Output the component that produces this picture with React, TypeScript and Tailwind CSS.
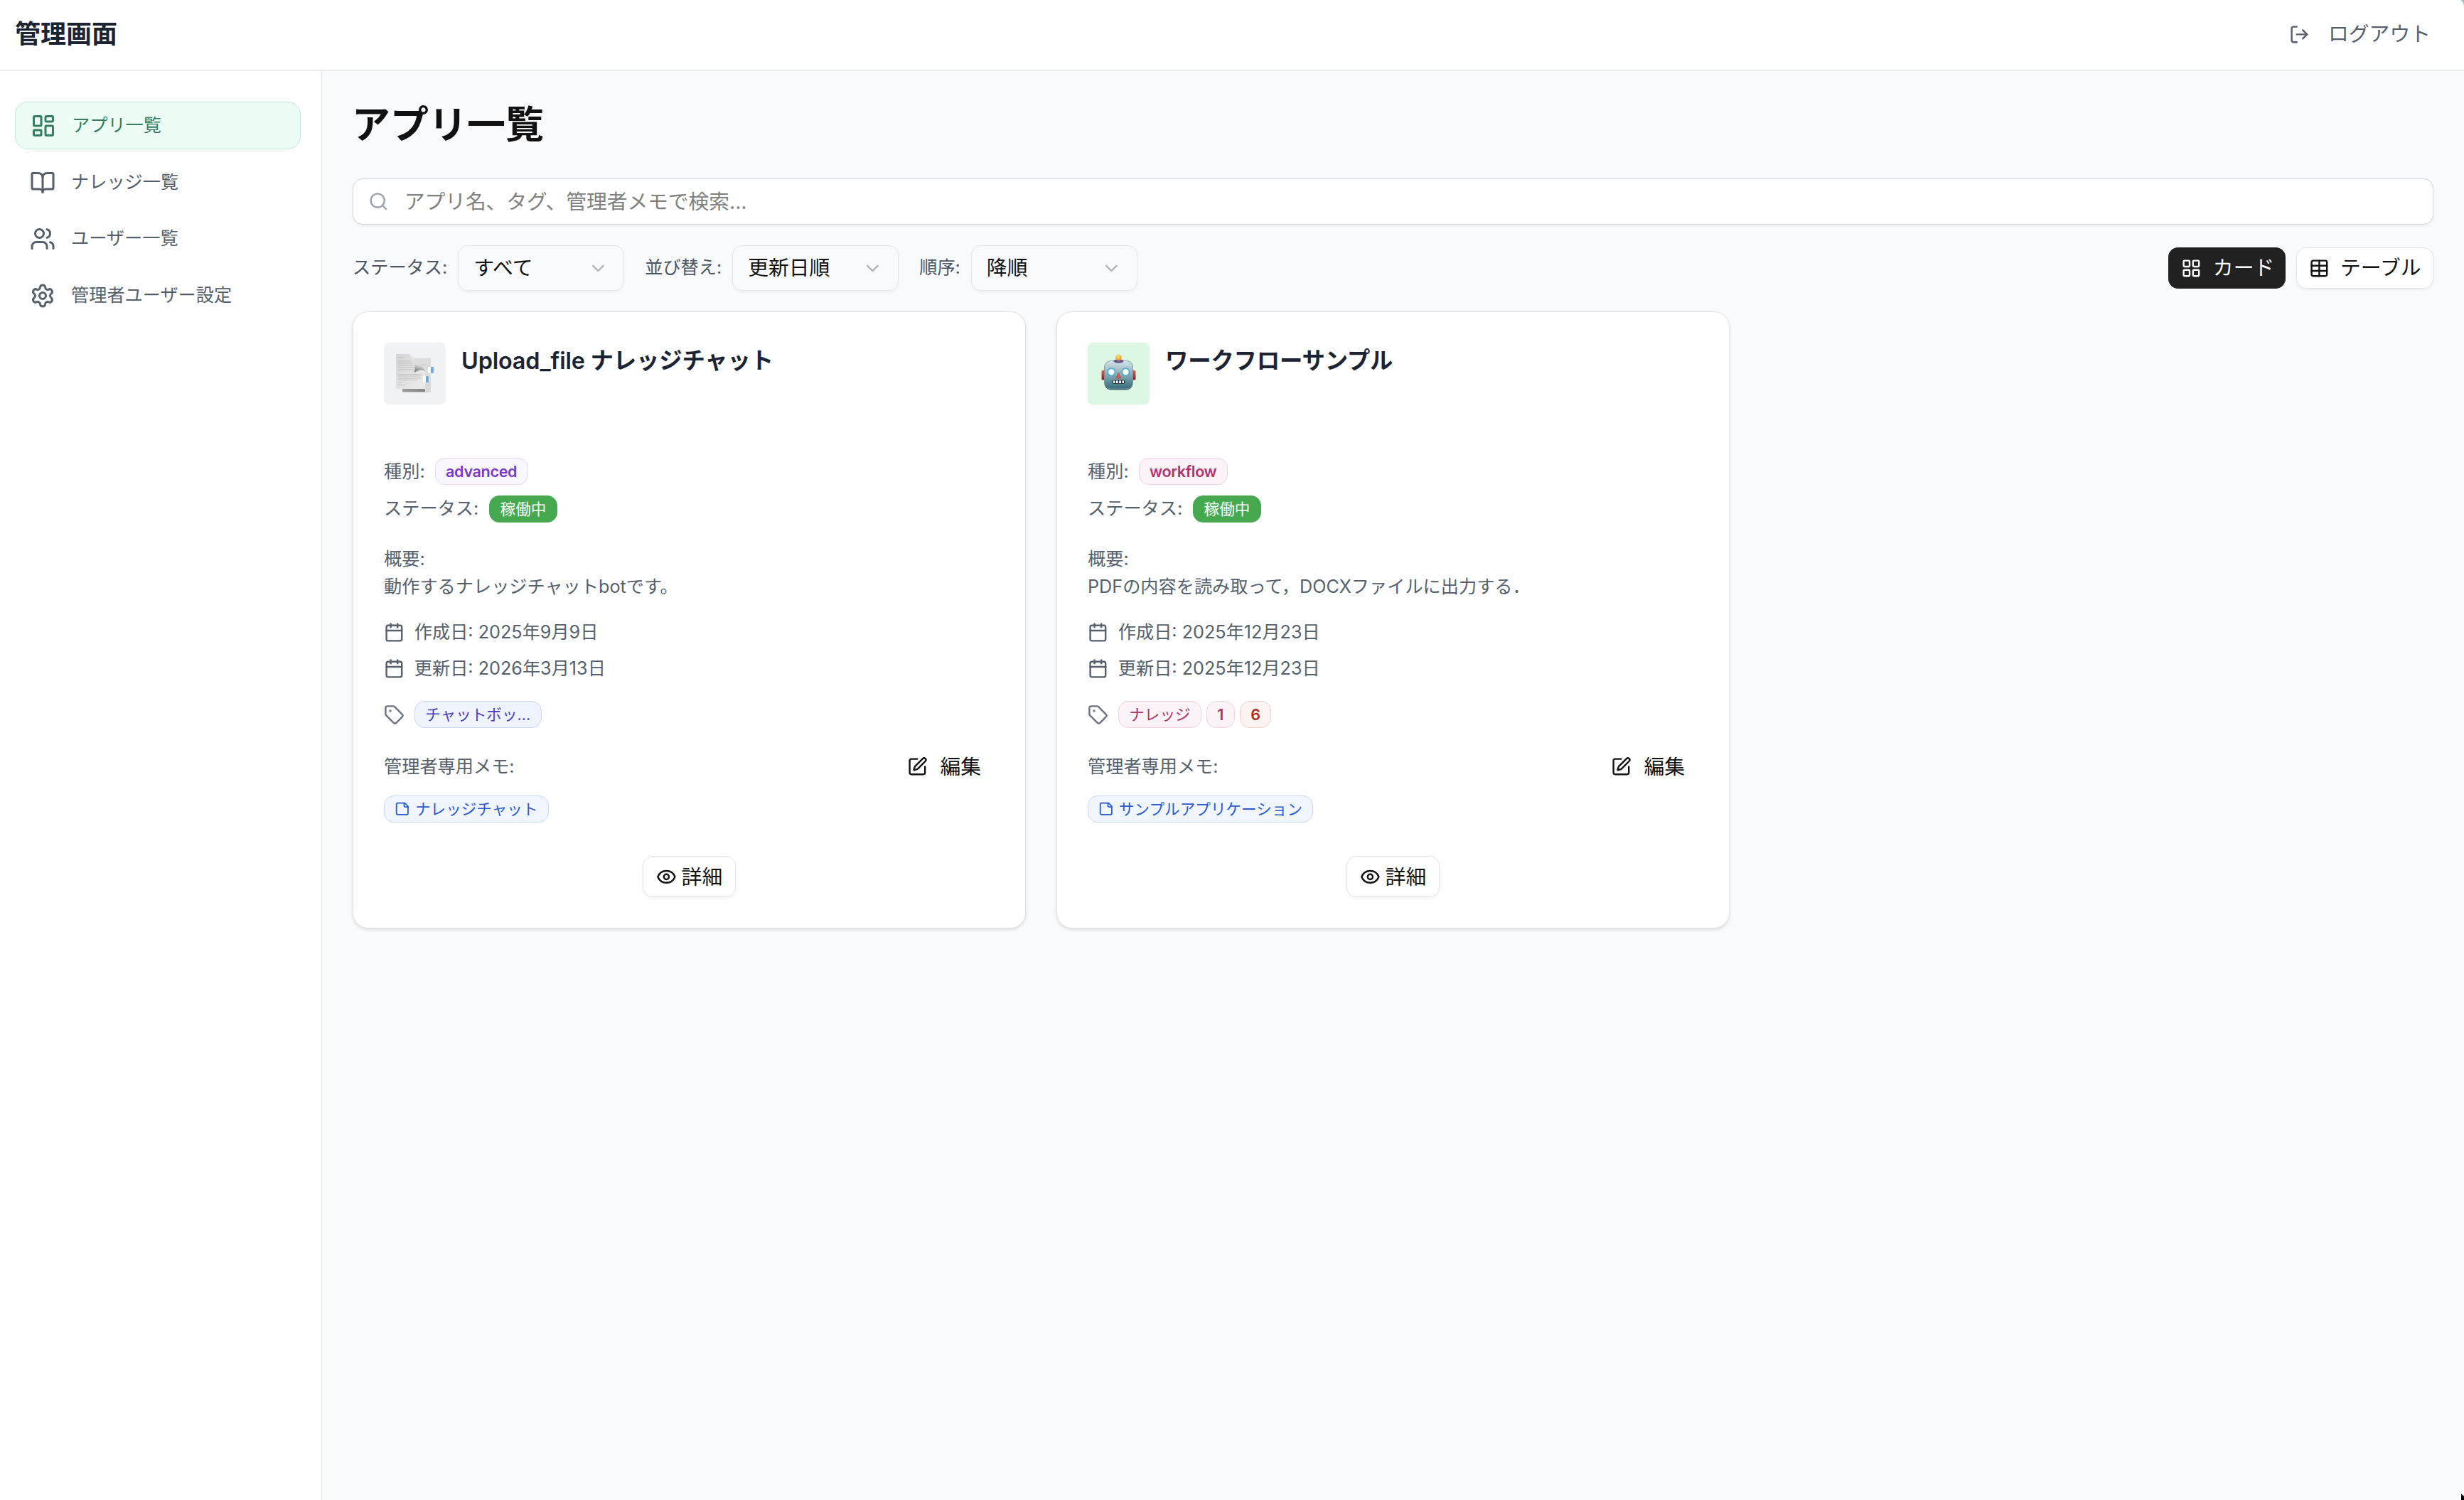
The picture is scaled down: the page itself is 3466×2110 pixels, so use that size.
import type { ReactNode } from "react";
import {
  BookOpen,
  Calendar,
  ChevronDown,
  Eye,
  LayoutDashboard,
  LayoutGrid,
  LogOut,
  Search,
  Settings,
  Table,
  Tag,
  Users,
} from "lucide-react";

type AppTag = { label: string; className: string };

type AppItem = {
  name: string;
  icon: ReactNode;
  iconClass: string;
  type: string;
  typeClass: string;
  description: string;
  createdAt: string;
  updatedAt: string;
  tags: AppTag[];
  memo: string;
};

const indigoTag = "border-[#ccd5f6] bg-[#eff3fd] text-[#4a3fc0]";
const pinkTag = "border-[#f0d3e3] bg-[#fbf3f8] text-[#ad356c]";
const redTag = "border-[#f3d0cd] bg-[#fcf3f2] text-[#aa2f26]";

/* ドキュメントの絵文字風アイコン */
function PageIcon() {
  return (
    <svg viewBox="5 7 87 87" className="size-full">
      <defs>
        <linearGradient id="page" x1="0" y1="0" x2="1" y2="1">
          <stop offset="0" stopColor="#d4d4d4" />
          <stop offset="0.5" stopColor="#e2e2e2" />
          <stop offset="1" stopColor="#ebebeb" />
        </linearGradient>
        <linearGradient id="curl" x1="0.55" y1="0.2" x2="0.35" y2="1">
          <stop offset="0" stopColor="#f6f6f6" />
          <stop offset="0.5" stopColor="#cfcfcf" />
          <stop offset="1" stopColor="#666666" />
        </linearGradient>
        <linearGradient id="under" x1="0" y1="0" x2="1" y2="0">
          <stop offset="0" stopColor="#9c9c9c" />
          <stop offset="0.75" stopColor="#858585" />
          <stop offset="1" stopColor="#d0d0d0" />
        </linearGradient>
      </defs>
      <path d="M46 29H71V76H60Z" fill="#dcdcdc" />
      <path d="M31 71H71V76.500H31Z" fill="url(#under)" />
      <path d="M63 66L71 60V76H63Z" fill="#d9d9d9" />
      <path d="M22 23H41C46 24 48 31 49 38C55 38 61 40 63 44V72H22Z" fill="url(#page)" />
      <path
        d="M25 27.500H33M25 33H43M25 36H45M25 39H45M25 42H47M25 45H48M25 51.500H58M25 54H58M25 57H57M25 59.500H52M25 63.500H31M25 66.500H36M58 38H64"
        stroke="#bdbdbd"
        strokeWidth="0.9"
      />
      <path d="M41 23C46 24 47 32 48.500 37C55 38 61 40 63 47C57 44 53 46 48 49C50 40 47 31 41 23Z" fill="url(#curl)" />
      <rect x="67" y="41" width="5" height="9" fill="#fff" />
      <rect x="71" y="41" width="3.800" height="9" rx="1" fill="#6aa7e8" />
      <rect x="60" y="54" width="5" height="9" fill="#fff" />
      <rect x="64" y="54" width="3.800" height="9" rx="1" fill="#6aa7e8" />
    </svg>
  );
}

/* ロボットの絵文字風アイコン */
function RobotIcon() {
  return (
    <svg viewBox="5 7 87 87" className="size-full">
      <defs>
        <linearGradient id="head" x1="0" y1="0" x2="0" y2="1">
          <stop offset="0" stopColor="#d3e3e7" />
          <stop offset="0.3" stopColor="#a5c2ca" />
          <stop offset="0.7" stopColor="#64929e" />
          <stop offset="1" stopColor="#376c7a" />
        </linearGradient>
        <linearGradient id="ear" x1="0" y1="0" x2="0" y2="1">
          <stop offset="0" stopColor="#d96a60" />
          <stop offset="1" stopColor="#7e211d" />
        </linearGradient>
        <radialGradient id="bulb" cx="0.45" cy="0.35" r="0.6">
          <stop offset="0" stopColor="#ffe07a" />
          <stop offset="1" stopColor="#ee9c2c" />
        </radialGradient>
      </defs>
      <rect x="24.500" y="46" width="5" height="13.500" rx="1.500" fill="url(#ear)" />
      <rect x="67.500" y="46" width="5" height="13.500" rx="1.500" fill="url(#ear)" />
      <path d="M28.500 45V60M68.500 45V60" stroke="#3c474e" strokeWidth="1.200" />
      <rect x="28.500" y="33" width="40" height="40.500" rx="9" fill="#2c5966" />
      <rect x="28.500" y="32.500" width="40" height="39.500" rx="9" fill="url(#head)" stroke="#7c989f" strokeWidth="0.8" />
      <path d="M41.500 33.500C42 30.500 45 30.500 48.500 30.500S55 30.500 55.500 33.500C53 36.500 44 36.500 41.500 33.500Z" fill="#65548b" />
      <circle cx="48.500" cy="28" r="4.300" fill="url(#bulb)" />
      <circle cx="38.300" cy="48.300" r="6" fill="#4ba9cc" />
      <circle cx="38.300" cy="48.300" r="4.200" fill="#fff" stroke="#a5e0f0" strokeWidth="1" />
      <circle cx="58.500" cy="48.300" r="6" fill="#4ba9cc" />
      <circle cx="58.500" cy="48.300" r="4.200" fill="#fff" stroke="#a5e0f0" strokeWidth="1" />
      <path d="M48.400 49L52 57H44.800Z" fill="#cf5a55" stroke="#b74c4a" strokeWidth="0.8" strokeLinejoin="round" />
      <rect x="39.500" y="59.800" width="18" height="5" rx="2.200" fill="#1f2a30" />
      <path d="M41 60.600H43.500V64H41ZM45 60.600H47.700V64H45ZM49.200 60.600H52V64H49.200ZM53.500 60.600H56V64H53.500Z" fill="#fff" />
    </svg>
  );
}

function EditIcon() {
  return (
    <svg
      viewBox="0 0 24 24"
      fill="none"
      stroke="currentColor"
      strokeWidth="2"
      strokeLinecap="round"
      strokeLinejoin="round"
      className="size-[28.8px]"
    >
      <path d="M12 3H5a2 2 0 0 0-2 2v14a2 2 0 0 0 2 2h14a2 2 0 0 0 2-2v-7" />
      <path d="M18.375 2.625a1 1 0 0 1 3 3l-9.013 9.014a2 2 0 0 1-.853.505l-2.873.84a.5.5 0 0 1-.62-.62l.84-2.873a2 2 0 0 1 .506-.852z" />
    </svg>
  );
}

function NoteIcon() {
  return (
    <svg
      viewBox="0 0 24 24"
      fill="none"
      stroke="currentColor"
      strokeWidth="2"
      strokeLinecap="round"
      strokeLinejoin="round"
      className="size-[21.6px]"
    >
      <path d="M16 3H5a2 2 0 0 0-2 2v14a2 2 0 0 0 2 2h14a2 2 0 0 0 2-2V8Z" />
      <path d="M15 3v4a2 2 0 0 0 2 2h4" />
    </svg>
  );
}

const apps: AppItem[] = [
  {
    name: "Upload_file ナレッジチャット",
    icon: <PageIcon />,
    iconClass: "bg-[#f1f2f6]",
    type: "advanced",
    typeClass: "border-[#e3d8f6] bg-[#f9f6fd] text-[#7a3ac6]",
    description: "動作するナレッジチャットbotです。",
    createdAt: "2025年9月9日",
    updatedAt: "2026年3月13日",
    tags: [{ label: "チャットボッ...", className: indigoTag }],
    memo: "ナレッジチャット",
  },
  {
    name: "ワークフローサンプル",
    icon: <RobotIcon />,
    iconClass: "bg-[#dcf7e3]",
    type: "workflow",
    typeClass: pinkTag,
    description: "PDFの内容を読み取って，DOCXファイルに出力する．",
    createdAt: "2025年12月23日",
    updatedAt: "2025年12月23日",
    tags: [
      { label: "ナレッジ", className: pinkTag },
      { label: "1", className: `font-semibold ${pinkTag}` },
      { label: "6", className: `font-semibold ${redTag}` },
    ],
    memo: "サンプルアプリケーション",
  },
];

const navItems = [
  { label: "アプリ一覧", Icon: LayoutDashboard, active: true },
  { label: "ナレッジ一覧", Icon: BookOpen, active: false },
  { label: "ユーザー一覧", Icon: Users, active: false },
  { label: "管理者ユーザー設定", Icon: Settings, active: false },
];

const filters = [
  { label: "ステータス:", value: "すべて" },
  { label: "並び替え:", value: "更新日順" },
  { label: "順序:", value: "降順" },
];

function Badge({ className, children }: { className: string; children: ReactNode }) {
  return (
    <span
      className={`flex h-[38px] items-center gap-[7px] rounded-[14px] border px-[14.4px] text-[21.6px] whitespace-nowrap ${className}`}
    >
      {children}
    </span>
  );
}

function AppCard({ app }: { app: AppItem }) {
  return (
    <article className="flex h-[868px] flex-col rounded-[22px] border border-[#e3e5e7] bg-white p-[43px] text-[25.2px] text-[#565f6c] shadow-[0_2px_4px_rgba(0,0,0,0.12)]">
      <div className="flex h-[162px] items-start gap-[22px]">
        <div className={`size-[87px] shrink-0 overflow-hidden rounded-[7px] ${app.iconClass}`}>{app.icon}</div>
        <h2 className="pt-px text-[32.4px] leading-[50px] font-semibold tracking-[-0.2px] text-[#1c2333]">{app.name}</h2>
      </div>

      <div className="flex h-[38px] items-center gap-[14px]">
        <span className="pt-px">種別:</span>
        <Badge className={`font-semibold tracking-[-0.35px] ${app.typeClass}`}>{app.type}</Badge>
      </div>
      <div className="mt-[15px] flex h-[38px] items-center gap-[15px]">
        <span>ステータス:</span>
        <Badge className="border-[#46a950] bg-[#46a950] text-white">稼働中</Badge>
      </div>

      <div className="mt-[32px] leading-[39px]">
        <p>概要:</p>
        <p>{app.description}</p>
      </div>

      <div className="mt-[26px] flex h-9 items-center gap-[14px]">
        <Calendar className="size-[28.8px]" />
        <span className="pt-[2px]">作成日: {app.createdAt}</span>
      </div>
      <div className="mt-[15px] flex h-9 items-center gap-[14px]">
        <Calendar className="size-[28.8px]" />
        <span className="pt-[2px]">更新日: {app.updatedAt}</span>
      </div>

      <div className="mt-[28px] flex h-[38px] items-center gap-[14px]">
        <Tag className="size-[28.8px] text-[#6b7280]" />
        <div className="flex gap-[7px]">
          {app.tags.map((tag) => (
            <Badge key={tag.label} className={tag.className}>
              {tag.label}
            </Badge>
          ))}
        </div>
      </div>

      <div className="mt-[25px] flex h-[58px] items-center justify-between">
        <span className="pt-[2px]">管理者専用メモ:</span>
        <button className="flex items-center gap-[18px] pr-[19px] text-[28.8px] text-[#111111]">
          <EditIcon />
          <span className="pt-px">編集</span>
        </button>
      </div>
      <div className="mt-[12px] flex">
        <Badge className="border-[#c5dbf7] bg-[#f0f5fe] text-[#2b5bd0]">
          <NoteIcon />
          <span className="pt-px">{app.memo}</span>
        </Badge>
      </div>

      <div className="mt-[47px] flex justify-center">
        <button className="flex h-[58px] items-center gap-[7px] rounded-[14px] border border-[#e5e5e5] bg-white px-[18px] text-[28.8px] text-[#111111] shadow-[0_2px_4px_rgba(0,0,0,0.05)]">
          <Eye className="size-[28.8px]" />
          <span className="pt-px">詳細</span>
        </button>
      </div>
    </article>
  );
}

export default function App() {
  return (
    <div className="relative flex h-[2110px] w-[3466px] flex-col overflow-hidden bg-[#f9fafc] font-['Inter','Noto_Sans_CJK_JP',sans-serif]">
      <header className="flex h-[100px] shrink-0 items-center justify-between border-b border-[#e5e7eb] bg-white pr-[47px] pb-[3px] pl-[21px]">
        <h1 className="text-[36px] font-bold text-[#1c2333]">管理画面</h1>
        <button className="flex items-center gap-[26px] text-[28.8px] text-[#565f6c]">
          <LogOut className="size-[28.8px]" />
          ログアウト
        </button>
      </header>

      <div className="flex min-h-0 flex-1">
        {/* サイドバー */}
        <aside className="w-[453px] shrink-0 border-r border-[#e5e7eb] bg-white pt-[43px] pr-[29px] pl-[21px]">
          <nav className="flex flex-col gap-[14px]">
            {navItems.map(({ label, Icon, active }) => (
              <a
                key={label}
                className={
                  active
                    ? "flex h-[67px] items-center gap-[22px] rounded-[18px] border border-[#bfe9d5] bg-[#edfcf4] px-[21px] text-[25.2px] text-[#347d5f]"
                    : "flex h-[65.5px] items-center gap-[22px] px-[21px] text-[25.2px] text-[#565f6c]"
                }
              >
                <Icon className="size-9" />
                {label}
              </a>
            ))}
          </nav>
        </aside>

        {/* メインコンテンツ */}
        <main className="min-w-0 flex-1 px-[43px] pt-[43px]">
          <h2 className="-ml-px h-[65px] text-[54px] leading-[65px] font-bold text-[#111111]">アプリ一覧</h2>

          <div className="mt-[43px] flex h-[65px] items-center gap-[22px] rounded-[14px] border border-[#d3d6db] bg-white px-[21px] text-[28.8px] tracking-[-0.1px] text-[#808080] shadow-[0_2px_4px_rgba(0,0,0,0.05)]">
            <Search className="size-[28.8px] text-[#9ca3af]" />
            アプリ名、タグ、管理者メモで検索...
          </div>

          <div className="mt-[29px] flex h-[64px] items-center justify-between">
            <div className="flex items-center gap-[29px]">
              {filters.map((filter) => (
                <div key={filter.label} className="flex items-center gap-[15px]">
                  <span className="text-[25.2px] text-[#4b5563]">{filter.label}</span>
                  <div className="flex h-[64px] w-[234px] items-center justify-between rounded-[14px] border border-[#e5e5e5] px-[21px] text-[28.8px] text-[#111111] shadow-[0_2px_4px_rgba(0,0,0,0.05)]">
                    {filter.value}
                    <ChevronDown className="size-[28.8px] opacity-30" />
                  </div>
                </div>
              ))}
            </div>
            <div className="flex gap-[15px] text-[28.8px]">
              <button className="flex h-[58px] items-center gap-[16px] rounded-[14px] bg-[#212121] pr-[16px] pl-[18px] text-[#fafafa]">
                <LayoutGrid className="size-[28.8px]" />
                カード
              </button>
              <button className="flex h-[58px] items-center gap-[15px] rounded-[14px] border border-[#e5e5e5] bg-white pr-[16.5px] pl-[17px] text-[#111111] shadow-[0_2px_4px_rgba(0,0,0,0.05)]">
                <Table className="size-[28.8px]" />
                テーブル
              </button>
            </div>
          </div>

          <div className="mt-[29px] grid grid-cols-3 gap-[43px]">
            {apps.map((app) => (
              <AppCard key={app.name} app={app} />
            ))}
          </div>
        </main>
      </div>

      {/* ウィンドウの角とカーソル */}
      <svg viewBox="0 0 5 9" className="absolute top-0 right-0 h-[9px] w-[5px]">
        <path d="M0 0H5V9C4.500 5 3 2 0 0Z" fill="#a3c3d4" />
      </svg>
      <svg viewBox="0 0 6 12" className="absolute right-0 bottom-0 h-[12px] w-[6px]">
        <path d="M0 0L6 6V12H0Z" fill="#fff" />
        <path d="M2 3L6 7V12H2Z" fill="#000" />
      </svg>
    </div>
  );
}
